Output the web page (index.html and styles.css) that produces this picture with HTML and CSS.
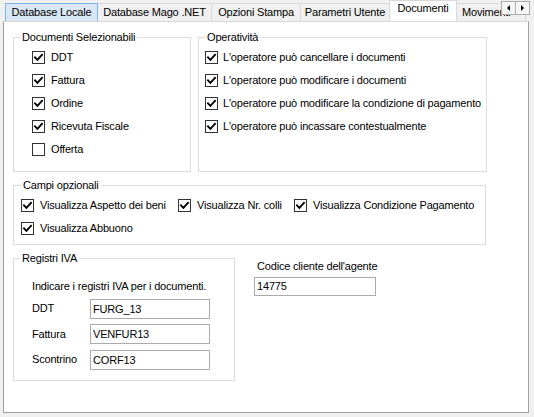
FILE: index.html
```html
<!DOCTYPE html>
<html lang="it">
<head>
<meta charset="utf-8">
<title>Documenti</title>
<link rel="stylesheet" href="styles.css">
</head>
<body>
<div class="window">
  <div class="tabstrip">
    <div class="tab hot t-dbl">Database Locale</div>
    <div class="tab t-mago">Database Mago .NET</div>
    <div class="tab t-stampa">Opzioni Stampa</div>
    <div class="tab t-param">Parametri Utente</div>
    <div class="tab sel t-docs">Documenti</div>
    <div class="tab t-mov">Movimenti</div>
    <div class="scroller">
      <span class="sbtn"><span class="arrow left"></span></span>
      <span class="sbtn"><span class="arrow right"></span></span>
    </div>
  </div>
  <div class="panel">
    <div class="row-top">
      <fieldset class="group g-docs">
        <legend>Documenti Selezionabili</legend>
        <div class="list indent">
          <label class="opt"><span class="cb on"><svg viewBox="0 0 11 11"><path d="M2 5.3 L4.4 7.8 L9 2.8"/></svg></span>DDT</label>
          <label class="opt"><span class="cb on"><svg viewBox="0 0 11 11"><path d="M2 5.3 L4.4 7.8 L9 2.8"/></svg></span>Fattura</label>
          <label class="opt"><span class="cb on"><svg viewBox="0 0 11 11"><path d="M2 5.3 L4.4 7.8 L9 2.8"/></svg></span>Ordine</label>
          <label class="opt"><span class="cb on"><svg viewBox="0 0 11 11"><path d="M2 5.3 L4.4 7.8 L9 2.8"/></svg></span>Ricevuta Fiscale</label>
          <label class="opt"><span class="cb"></span>Offerta</label>
        </div>
      </fieldset>
      <fieldset class="group g-oper">
        <legend>Operatività</legend>
        <div class="list">
          <label class="opt"><span class="cb on"><svg viewBox="0 0 11 11"><path d="M2 5.3 L4.4 7.8 L9 2.8"/></svg></span>L'operatore può cancellare i documenti</label>
          <label class="opt"><span class="cb on"><svg viewBox="0 0 11 11"><path d="M2 5.3 L4.4 7.8 L9 2.8"/></svg></span>L'operatore può modificare i documenti</label>
          <label class="opt"><span class="cb on"><svg viewBox="0 0 11 11"><path d="M2 5.3 L4.4 7.8 L9 2.8"/></svg></span>L'operatore può modificare la condizione di pagamento</label>
          <label class="opt"><span class="cb on"><svg viewBox="0 0 11 11"><path d="M2 5.3 L4.4 7.8 L9 2.8"/></svg></span>L'operatore può incassare contestualmente</label>
        </div>
      </fieldset>
    </div>

    <fieldset class="group g-campi">
      <legend>Campi opzionali</legend>
      <div class="campi-grid">
        <label class="opt"><span class="cb on"><svg viewBox="0 0 11 11"><path d="M2 5.3 L4.4 7.8 L9 2.8"/></svg></span>Visualizza Aspetto dei beni</label>
        <label class="opt"><span class="cb on"><svg viewBox="0 0 11 11"><path d="M2 5.3 L4.4 7.8 L9 2.8"/></svg></span>Visualizza Nr. colli</label>
        <label class="opt"><span class="cb on"><svg viewBox="0 0 11 11"><path d="M2 5.3 L4.4 7.8 L9 2.8"/></svg></span>Visualizza Condizione Pagamento</label>
        <label class="opt"><span class="cb on"><svg viewBox="0 0 11 11"><path d="M2 5.3 L4.4 7.8 L9 2.8"/></svg></span>Visualizza Abbuono</label>
      </div>
    </fieldset>

    <div class="row-bottom">
      <fieldset class="group g-iva">
        <legend>Registri IVA</legend>
        <div class="iva-body">
          <div class="hint">Indicare i registri IVA per i documenti.</div>
          <div class="field"><span class="flabel">DDT</span><span class="tbox">FURG_13</span></div>
          <div class="field"><span class="flabel">Fattura</span><span class="tbox">VENFUR13</span></div>
          <div class="field"><span class="flabel">Scontrino</span><span class="tbox">CORF13</span></div>
        </div>
      </fieldset>
      <div class="agent">
        <div class="alabel">Codice cliente dell'agente</div>
        <span class="tbox wide">14775</span>
      </div>
    </div>
  </div>
</div>
</body>
</html>
```

FILE: styles.css
```css
* { box-sizing: border-box; }

html, body {
  margin: 0;
  padding: 0;
}

body {
  width: 534px;
  height: 417px;
  overflow: hidden;
  background: #f0f0f0;
  font-family: "Liberation Sans", Arial, sans-serif;
  font-size: 11px;
  line-height: 13px;
  letter-spacing: -0.18px;
  color: #000;
}

.window {
  padding-left: 3px;
}

/* ---------- tabs ---------- */
.tabstrip {
  position: relative;
  display: flex;
  align-items: flex-end;
  height: 21px;
  padding-left: 2px;
  overflow: hidden;
  width: 531px;
}

.tab {
  flex: none;
  height: 18px;
  border: 1px solid #d9d9d9;
  border-bottom: 0;
  background: #f0f0f0;
  line-height: 17px;
  text-align: center;
  white-space: nowrap;
  overflow: hidden;
  margin-right: -1px;
}

.t-dbl { width: 93px; }
.t-mago { width: 115px; }
.t-stampa { width: 90px; }
.t-param { width: 90px; }
.t-docs { width: 68px; }
.t-mov { width: 70px; text-align: left; padding-left: 5px; }

.tab.hot {
  background: #d8e6f5;
  border-color: #7eb4ea;
  position: relative;
  z-index: 1;
}

.tab.sel {
  height: 22px;
  margin-bottom: -1px;
  background: #fff;
  line-height: 15px;
  position: relative;
  z-index: 2;
}

.scroller {
  position: absolute;
  top: 1px;
  right: 4px;
  display: flex;
  z-index: 3;
}

.sbtn {
  width: 15px;
  height: 14px;
  border: 1px solid #adadad;
  background: #f7f7f7;
  display: flex;
  align-items: center;
  justify-content: center;
}

.sbtn + .sbtn { margin-left: -1px; }

.arrow {
  width: 0;
  height: 0;
  border-top: 3px solid transparent;
  border-bottom: 3px solid transparent;
}
.arrow.left { border-right: 3px solid #000; }
.arrow.right { border-left: 3px solid #000; }

/* ---------- panel ---------- */
.panel {
  width: 526px;
  height: 392px;
  background: #fff;
  border: 1px solid #a0a0a0;
  border-top-color: #d9d9d9;
  padding: 9px 0 0 9px;
}

.row-top {
  display: flex;
  align-items: stretch;
  gap: 7px;
}

fieldset.group {
  margin: 0;
  border: 1px solid #dcdcdc;
  padding: 0 6px;
  min-width: 0;
}

fieldset.group legend {
  padding: 0 2px;
  line-height: 13px;
}

fieldset.g-docs { width: 178px; padding-top: 2px; padding-bottom: 10px; }
fieldset.g-oper { width: 289px; padding-top: 2px; padding-bottom: 10px; }

.list.indent { padding-left: 12px; }

.opt {
  display: flex;
  align-items: center;
  height: 23px;
  gap: 6px;
  white-space: nowrap;
}

.g-oper .opt { gap: 5px; }

.cb {
  flex: none;
  width: 13px;
  height: 13px;
  border: 1px solid #333;
  background: #fff;
  display: flex;
}

.cb svg {
  width: 11px;
  height: 11px;
}

.cb svg path {
  fill: none;
  stroke: #000;
  stroke-width: 1.9;
  stroke-linecap: square;
}

/* ---------- campi opzionali ---------- */
fieldset.g-campi {
  width: 473px;
  margin-top: 7px;
  padding: 2px 6px 4px 7px;
}

.campi-grid {
  display: grid;
  grid-template-columns: 157px 116px auto;
}

/* ---------- registri IVA ---------- */
.row-bottom {
  display: flex;
  align-items: flex-start;
  margin-top: 7px;
  gap: 19px;
}

fieldset.g-iva {
  width: 222px;
  padding: 0 6px 10px 6px;
}

.iva-body {
  padding: 15px 0 0 12px;
}

.hint {
  height: 13px;
  margin-bottom: 5.5px;
}

.field {
  display: flex;
  align-items: center;
  height: 20px;
}

.field + .field { margin-top: 5.5px; }

.flabel {
  width: 58px;
}

.tbox {
  display: block;
  width: 120px;
  height: 20px;
  border: 1px solid #ababab;
  background: #fff;
  padding: 0 2px;
  line-height: 18px;
  white-space: nowrap;
}

.agent {
  padding-top: 8px;
}

.alabel {
  padding-left: 3px;
  height: 13px;
  margin-bottom: 4px;
}

.tbox.wide {
  width: 122px;
  height: 19px;
  line-height: 17px;
}
```
